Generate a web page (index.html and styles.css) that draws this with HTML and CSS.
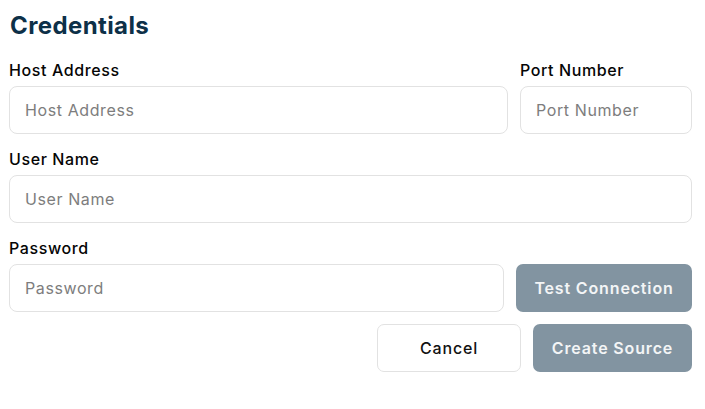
FILE: index.html
```html
<!DOCTYPE html>
<html>
<head>
    <meta charset="utf-8">
    <title>Credentials</title>
    <link rel="stylesheet" href="styles.css">
</head>
<body>
    <div class="credentials">
        <h1>Credentials</h1>

        <div class="row">
            <div class="field grow">
                <label for="host">Host Address</label>
                <input type="text" id="host" placeholder="Host Address">
            </div>
            <div class="field port">
                <label for="port">Port Number</label>
                <input type="text" id="port" placeholder="Port Number">
            </div>
        </div>

        <div class="row">
            <div class="field grow">
                <label for="user">User Name</label>
                <input type="text" id="user" placeholder="User Name">
            </div>
        </div>

        <div class="row">
            <div class="field grow">
                <label for="password">Password</label>
                <input type="password" id="password" placeholder="Password">
            </div>
            <button class="btn primary test">Test Connection</button>
        </div>

        <div class="actions">
            <button class="btn secondary cancel">Cancel</button>
            <button class="btn primary create">Create Source</button>
        </div>
    </div>
</body>
</html>
```

FILE: styles.css
```css
body {
    margin: 0;
    padding: 0;
    background: #ffffff;
    font-family: Inter, "Open Sans", Arial, sans-serif;
    color: #000000;
}

.credentials {
    width: 683px;
    padding: 0 13px 0 9px;
}

h1 {
    margin: 10px 0 16px 1px;
    font-size: 24px;
    line-height: 32px;
    font-weight: 700;
    letter-spacing: 0.4px;
    color: #0d3048;
}

.row {
    display: flex;
    align-items: flex-end;
    gap: 12px;
    margin-bottom: 13px;
}

.field {
    display: flex;
    flex-direction: column;
}

.grow {
    flex: 1;
}

.port {
    width: 172px;
}

label {
    font-size: 16px;
    line-height: 24px;
    font-weight: 500;
    letter-spacing: 0.6px;
    color: #050505;
    margin: 0 0 4px 0;
}

input {
    box-sizing: border-box;
    height: 48px;
    width: 100%;
    padding: 0 15px;
    font-family: inherit;
    font-size: 16px;
    letter-spacing: 0.6px;
    color: #333;
    border: 1px solid #e2e2e2;
    border-radius: 8px;
    background: #ffffff;
    outline: none;
}

input::placeholder {
    color: #7d7d7d;
}

.btn {
    box-sizing: border-box;
    height: 48px;
    border-radius: 7px;
    font-family: inherit;
    font-size: 16px;
    font-weight: 600;
    letter-spacing: 0.85px;
    cursor: pointer;
}

.primary {
    background: #8294a1;
    color: #f3f5f6;
    border: none;
}

.secondary {
    background: #ffffff;
    color: #111;
    font-weight: 500;
    border: 1px solid #e2e2e2;
}

.test {
    width: 176px;
}

.actions {
    display: flex;
    justify-content: flex-end;
    gap: 12px;
    margin-top: -1px;
}

.cancel {
    width: 144px;
}

.create {
    width: 159px;
}
```
